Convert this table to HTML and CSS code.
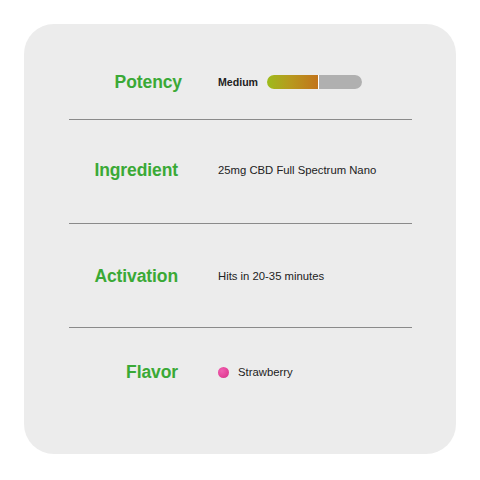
FILE: index.html
```html
<!DOCTYPE html>
<html lang="en">
<head>
<meta charset="utf-8">
<title>Product details</title>
<link rel="stylesheet" href="styles.css">
</head>
<body>
<div class="card">
  <div class="section section-first">
    <div class="label label-potency">Potency</div>
    <div class="value">
      <span class="level">Medium</span>
      <span class="meter">
        <span class="meter-fill"></span>
        <span class="meter-rest"></span>
      </span>
    </div>
  </div>
  <div class="divider"></div>
  <div class="section">
    <div class="label">Ingredient</div>
    <div class="value">25mg CBD Full Spectrum Nano</div>
  </div>
  <div class="divider"></div>
  <div class="section section-third">
    <div class="label">Activation</div>
    <div class="value">Hits in 20-35 minutes</div>
  </div>
  <div class="divider"></div>
  <div class="section section-last">
    <div class="label">Flavor</div>
    <div class="value"><span class="dot"></span>Strawberry</div>
  </div>
</div>
</body>
</html>
```
FILE: styles.css
```css
html, body {
  margin: 0;
  padding: 0;
  background: #ffffff;
}

body {
  padding: 24px;
  font-family: "Liberation Sans", Arial, sans-serif;
}

.card {
  width: 432px;
  height: 430px;
  box-sizing: border-box;
  background: #ececec;
  border-radius: 30px;
  padding: 0 44px 0 45px;
  display: flex;
  flex-direction: column;
}

.section {
  display: flex;
  align-items: center;
  height: 20px;
  padding: 40px 0 43px;
}

.section-first {
  padding: 48px 0 27px;
}

.section-third {
  padding: 42px 0 41px;
}

.section-last {
  padding: 34px 0 0;
}

.divider {
  height: 1px;
  background: #8a8a8a;
}

.label {
  width: 109px;
  text-align: right;
  color: #3aa936;
  font-weight: bold;
  font-size: 17.5px;
  letter-spacing: -0.1px;
}

.label-potency {
  margin-right: -4px;
  width: 113px;
}

.value {
  margin-left: 40px;
  display: flex;
  align-items: center;
  font-size: 11.3px;
  color: #222222;
}

.level {
  font-weight: bold;
  font-size: 10.6px;
  color: #222222;
}

.meter {
  display: flex;
  margin-left: 9px;
  width: 95px;
  height: 14px;
  border-radius: 7px;
  overflow: hidden;
  background: #ffffff;
}

.meter-fill {
  width: 51px;
  background: linear-gradient(90deg, #9dbb1c 0%, #b79a1e 45%, #c2741b 100%);
}

.meter-rest {
  flex: 1;
  margin-left: 1px;
  background: #b0b0b0;
}

.dot {
  width: 11px;
  height: 11px;
  border-radius: 50%;
  margin-right: 9px;
  background: radial-gradient(circle at 35% 35%, #f060b0 0%, #e5449a 55%, #c93484 100%);
}
```
